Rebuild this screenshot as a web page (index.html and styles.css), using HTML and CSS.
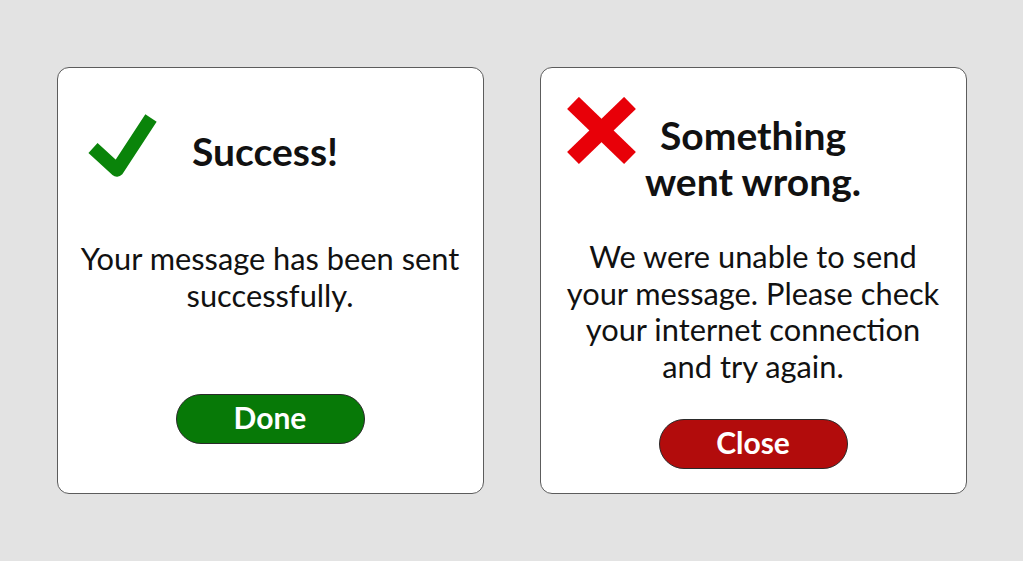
FILE: index.html
```html
<!DOCTYPE html>
<html lang="en">
<head>
<meta charset="utf-8">
<title>Message status</title>
<link rel="stylesheet" href="styles.css">
</head>
<body>
<main class="page">
  <section class="card card--success">
    <div class="card__head">
      <svg class="card__icon" width="76" height="70" viewBox="0 0 76 70" aria-hidden="true">
        <polyline points="9,35 33,57 67,5" fill="none" stroke="#0a840a" stroke-width="13.5" stroke-linejoin="round" stroke-linecap="butt"/>
      </svg>
      <h2 class="card__title">Success!</h2>
    </div>
    <p class="card__message">Your message has been sent successfully.</p>
    <button class="card__btn card__btn--done" type="button">Done</button>
  </section>

  <section class="card card--error">
    <div class="card__head">
      <svg class="card__icon" width="76" height="70" viewBox="0 0 76 70" aria-hidden="true">
        <g stroke="#e80008" stroke-width="17" stroke-linecap="butt">
          <line x1="6" y1="6" x2="63" y2="61"/>
          <line x1="63" y1="6" x2="6" y2="61"/>
        </g>
      </svg>
      <h2 class="card__title">Something<br>went wrong.</h2>
    </div>
    <p class="card__message">We were unable to send your message. Please check your internet connection and try again.</p>
    <button class="card__btn card__btn--close" type="button">Close</button>
  </section>
</main>
</body>
</html>
```

FILE: styles.css
```css
html, body {
  margin: 0;
  padding: 0;
}

body {
  background: #e3e3e3;
  font-family: Lato, "Open Sans", "DejaVu Sans", sans-serif;
  color: #111;
}

.page {
  height: 561px;
  display: flex;
  justify-content: center;
  align-items: center;
  gap: 56px;
}

.card {
  width: 427px;
  height: 427px;
  box-sizing: border-box;
  background: #fff;
  border: 1px solid #5c5c5c;
  border-radius: 12px;
  display: flex;
  flex-direction: column;
  align-items: center;
}

.card--success {
  padding-top: 45px;
}

.card--error {
  padding-top: 29px;
}

.card__head {
  align-self: stretch;
  display: grid;
  grid-template-columns: 1fr auto 1fr;
  align-items: start;
  padding: 0 26px;
}

.card--success .card__head {
  padding-right: 36px;
}

.card__icon {
  display: block;
}

.card__title {
  margin: 15px 0 0;
  font-size: 39px;
  line-height: 46px;
  font-weight: 700;
  text-align: center;
  color: #111;
}

.card__message {
  margin: 0;
  padding: 0 21px;
  font-size: 30.8px;
  line-height: 36.6px;
  text-align: center;
}

.card--success .card__message {
  margin-top: 58px;
}

.card--error .card__message {
  margin-top: 35px;
}

.card__btn {
  width: 189px;
  height: 50px;
  border: 1px solid #2a2a2a;
  border-radius: 25px;
  font-family: Lato, "Open Sans", sans-serif;
  font-size: 30px;
  font-weight: 700;
  color: #fff;
  padding: 0 0 4px;
  cursor: pointer;
}

.card--success .card__btn {
  margin-top: 80px;
}

.card--error .card__btn {
  margin-top: 34px;
}

.card__btn--done {
  background: #077907;
}

.card__btn--close {
  background: #b20c0c;
}
```
